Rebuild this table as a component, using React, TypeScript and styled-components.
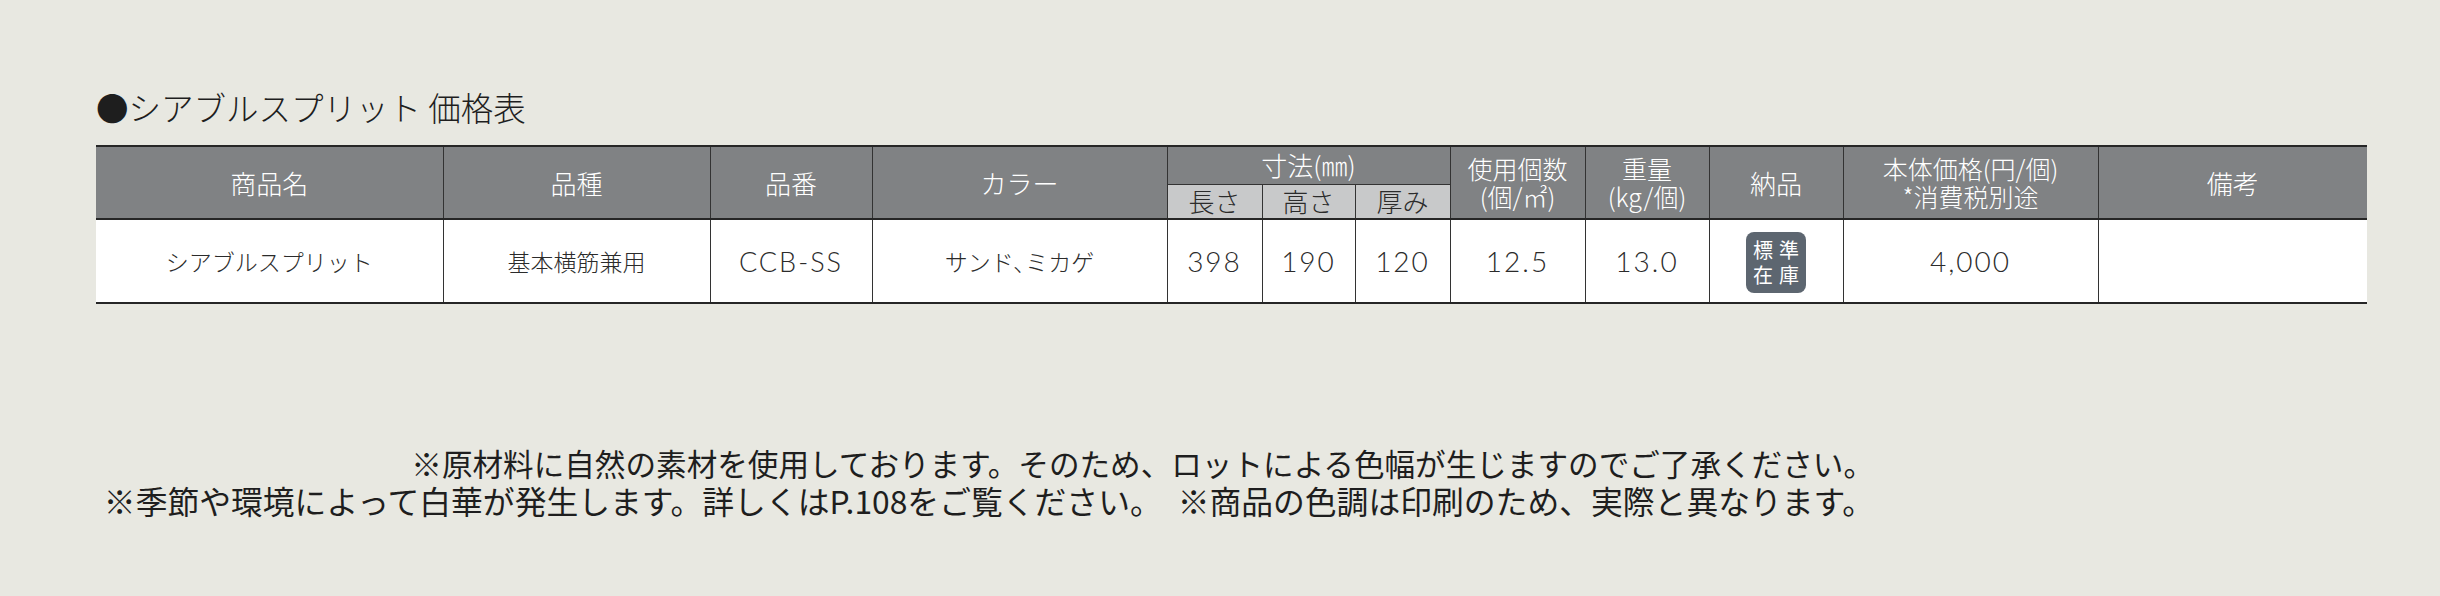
import React from 'react';
import styled, { createGlobalStyle } from 'styled-components';

const GlobalStyle = createGlobalStyle`
    html, body {
        margin: 0;
        padding: 0;
        background: #e8e8e1;
    }
    body {
        font-family: 'Noto Sans CJK JP', 'Noto Sans', sans-serif;
        color: #2b2b2b;
    }
`;

const JP = `'Noto Sans CJK JP', 'Noto Sans', sans-serif`;
const NUM = `Lato, 'Noto Sans CJK JP', sans-serif`;

interface Column {
    key: string;
    width: number;
}

const columns: Column[] = [
    { key: 'name', width: 347 },
    { key: 'kind', width: 267 },
    { key: 'code', width: 162 },
    { key: 'color', width: 295 },
    { key: 'len', width: 95 },
    { key: 'hei', width: 93 },
    { key: 'thk', width: 95 },
    { key: 'qty', width: 135 },
    { key: 'wgt', width: 124 },
    { key: 'dlv', width: 134 },
    { key: 'price', width: 255 },
    { key: 'note', width: 269 }
];

export default function App() {
    return (
        <Page>
            <GlobalStyle />
            <Title>●シアブルスプリット 価格表</Title>

            <PriceTable>
                <colgroup>
                    {columns.map(c => (
                        <col key={c.key} style={{ width: c.width }} />
                    ))}
                </colgroup>
                <thead>
                    <HeadRowTop>
                        <HeadCell rowSpan={2}>商品名</HeadCell>
                        <HeadCell rowSpan={2}>品種</HeadCell>
                        <HeadCell rowSpan={2}>品番</HeadCell>
                        <HeadCell rowSpan={2}>カラー</HeadCell>
                        <HeadCell colSpan={3}>寸法(㎜)</HeadCell>
                        <HeadCell rowSpan={2}>
                            <TwoLine>
                                <span>使用個数</span>
                                <span>(個/㎡)</span>
                            </TwoLine>
                        </HeadCell>
                        <HeadCell rowSpan={2}>
                            <TwoLine>
                                <span>重量</span>
                                <span>(kg/個)</span>
                            </TwoLine>
                        </HeadCell>
                        <HeadCell rowSpan={2}>納品</HeadCell>
                        <HeadCell rowSpan={2}>
                            <TwoLine>
                                <span>本体価格(円/個)</span>
                                <span>*消費税別途</span>
                            </TwoLine>
                        </HeadCell>
                        <HeadCell rowSpan={2}>備考</HeadCell>
                    </HeadRowTop>
                    <HeadRowSub>
                        <SubCell>長さ</SubCell>
                        <SubCell>高さ</SubCell>
                        <SubCell>厚み</SubCell>
                    </HeadRowSub>
                </thead>
                <tbody>
                    <BodyRow>
                        <Cell>シアブルスプリット</Cell>
                        <Cell>基本横筋兼用</Cell>
                        <Cell $latin>CCB-SS</Cell>
                        <Cell>サンド､ミカゲ</Cell>
                        <Cell $num>398</Cell>
                        <Cell $num>190</Cell>
                        <Cell $num>120</Cell>
                        <Cell $num>12.5</Cell>
                        <Cell $num>13.0</Cell>
                        <Cell>
                            <StockBadge>
                                <span>標準</span>
                                <span>在庫</span>
                            </StockBadge>
                        </Cell>
                        <Cell $num>4,000</Cell>
                        <Cell />
                    </BodyRow>
                </tbody>
            </PriceTable>

            <Notes>
                <NoteLine $size={30.6}>
                    ※原材料に自然の素材を使用しております。そのため、ロットによる色幅が生じますのでご了承ください。
                </NoteLine>
                <NoteLine $size={31.8}>
                    ※季節や環境によって白華が発生します。詳しくはP.108をご覧ください。　※商品の色調は印刷のため、実際と異なります。
                </NoteLine>
            </Notes>
        </Page>
    );
}

const Page = styled.div`
    width: 2440px;
    height: 596px;
    box-sizing: border-box;
    padding: 86px 0 0 96px;
    overflow: hidden;
`;

const Title = styled.h1`
    margin: 0 0 18px 0;
    font-family: ${JP};
    font-weight: 300;
    font-size: 32.5px;
    line-height: 41px;
    color: #1e1e1e;
`;

const PriceTable = styled.table`
    width: 2271px;
    table-layout: fixed;
    border-collapse: collapse;
    border-top: 2px solid #262626;
    border-bottom: 2px solid #262626;
    thead {
        border-bottom: 2px solid #262626;
    }
`;

const HeadRowTop = styled.tr`
    height: 38px;
`;

const HeadRowSub = styled.tr`
    height: 35px;
`;

const BodyRow = styled.tr`
    height: 84px;
`;

const HeadCell = styled.th`
    background: #808284;
    color: #fff;
    font-family: ${JP};
    font-weight: 300;
    font-size: 26px;
    line-height: 30px;
    text-align: center;
    vertical-align: middle;
    padding: 0;
    border-left: 1.5px solid #333;
    border-bottom: 1.5px solid #333;
    white-space: nowrap;
    &:first-child {
        border-left: none;
    }
`;

const TwoLine = styled.div`
    display: flex;
    flex-direction: column;
    align-items: center;
    gap: 0;
    font-size: 25px;
    line-height: 28px;
    padding-bottom: 2px;
`;

const SubCell = styled.th`
    background: #c8c9ca;
    color: #2b2b2b;
    font-family: ${JP};
    font-weight: 300;
    font-size: 26px;
    line-height: 30px;
    text-align: center;
    vertical-align: middle;
    padding: 0;
    border-left: 1.5px solid #333;
`;

const Cell = styled.td<{ $num?: boolean; $latin?: boolean }>`
    background: #fff;
    color: #2b2b2b;
    font-family: ${p => (p.$num || p.$latin ? NUM : JP)};
    font-weight: 300;
    font-size: ${p => (p.$num ? '28px' : p.$latin ? '27px' : '23px')};
    letter-spacing: ${p => (p.$num || p.$latin ? '2px' : '0')};
    text-align: center;
    vertical-align: middle;
    padding: 0;
    border-left: 1px solid #333;
    white-space: nowrap;
    &:first-child {
        border-left: none;
    }
`;

const StockBadge = styled.div`
    display: inline-flex;
    flex-direction: column;
    align-items: center;
    justify-content: center;
    width: 60px;
    height: 61px;
    margin-top: 2px;
    box-sizing: border-box;
    padding-left: 6px;
    border-radius: 8px;
    background: #5d6670;
    color: #fff;
    font-family: ${JP};
    font-size: 20px;
    font-weight: 400;
    line-height: 25px;
    letter-spacing: 6px;
`;

const Notes = styled.div`
    width: 1778px;
    margin-top: 141px;
    text-align: right;
`;

const NoteLine = styled.p<{ $size: number }>`
    margin: 0;
    font-family: ${JP};
    font-weight: 400;
    font-size: ${p => p.$size}px;
    line-height: 37px;
    color: #1e1e1e;
    white-space: nowrap;
`;
